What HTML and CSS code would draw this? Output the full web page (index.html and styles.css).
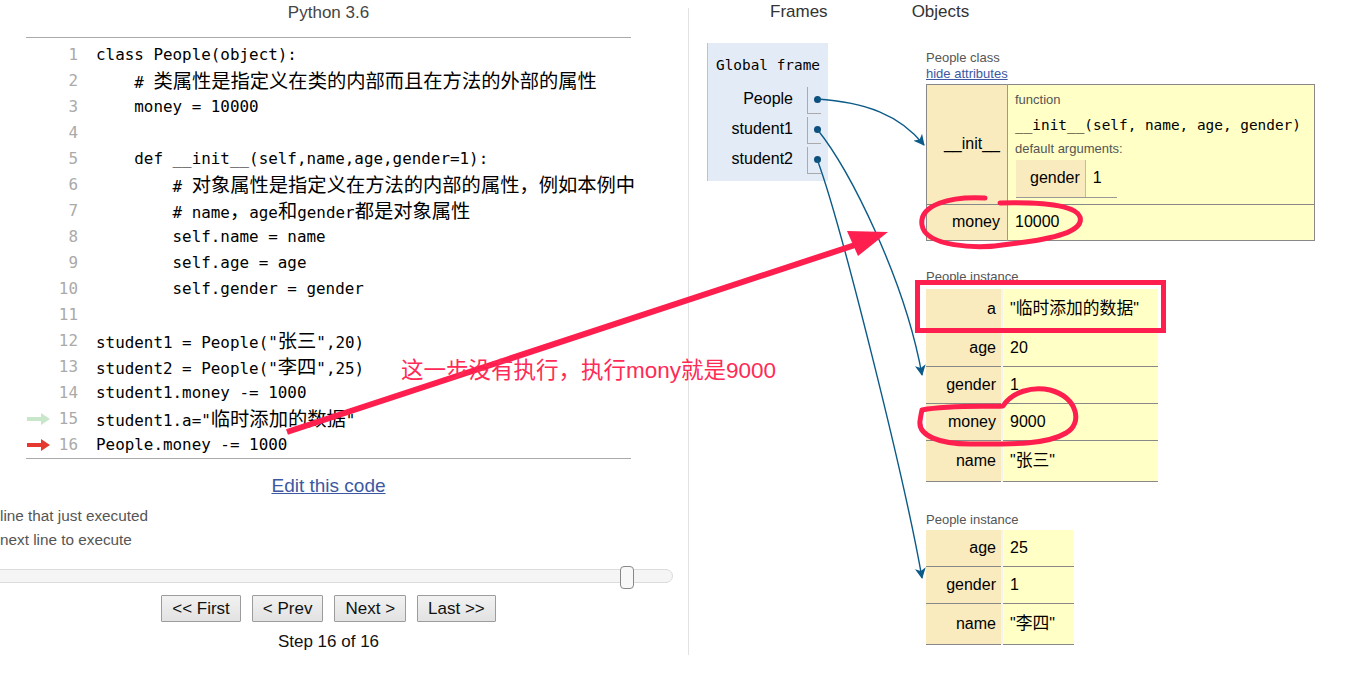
FILE: index.html
```html
<!DOCTYPE html>
<html>
<head>
<meta charset="utf-8">
<title>Python Tutor</title>
<link rel="stylesheet" href="styles.css">
</head>
<body>
<div class="page">
  <section class="left">
    <div class="left-inner">
      <div class="lang">Python 3.6</div>
      <div class="code">
        <div class="line"><span class="gutter"></span><span class="num">1</span><span class="src">class People(object):</span></div>
        <div class="line"><span class="gutter"></span><span class="num">2</span><span class="src">    # <span class="zh">类属性是指定义在类的内部而且在方法的外部的属性</span></span></div>
        <div class="line"><span class="gutter"></span><span class="num">3</span><span class="src">    money = 10000</span></div>
        <div class="line"><span class="gutter"></span><span class="num">4</span><span class="src"></span></div>
        <div class="line"><span class="gutter"></span><span class="num">5</span><span class="src">    def __init__(self,name,age,gender=1):</span></div>
        <div class="line"><span class="gutter"></span><span class="num">6</span><span class="src">        # <span class="zh">对象属性是指定义在方法的内部的属性，例如本例中</span></span></div>
        <div class="line"><span class="gutter"></span><span class="num">7</span><span class="src">        # name<span class="zh">，</span>age<span class="zh">和</span>gender<span class="zh">都是对象属性</span></span></div>
        <div class="line"><span class="gutter"></span><span class="num">8</span><span class="src">        self.name = name</span></div>
        <div class="line"><span class="gutter"></span><span class="num">9</span><span class="src">        self.age = age</span></div>
        <div class="line"><span class="gutter"></span><span class="num">10</span><span class="src">        self.gender = gender</span></div>
        <div class="line"><span class="gutter"></span><span class="num">11</span><span class="src"></span></div>
        <div class="line"><span class="gutter"></span><span class="num">12</span><span class="src">student1 = People("<span class="zh">张三</span>",20)</span></div>
        <div class="line"><span class="gutter"></span><span class="num">13</span><span class="src">student2 = People("<span class="zh">李四</span>",25)</span></div>
        <div class="line"><span class="gutter"></span><span class="num">14</span><span class="src">student1.money -= 1000</span></div>
        <div class="line"><span class="gutter"><svg class="garrow" width="24" height="12" viewBox="0 0 24 12"><path d="M0 4H14V0L23 6L14 12V8H0Z" fill="#c8e6c9"/></svg></span><span class="num">15</span><span class="src">student1.a="<span class="zh">临时添加的数据</span>"</span></div>
        <div class="line"><span class="gutter"><svg class="garrow" width="24" height="12" viewBox="0 0 24 12"><path d="M0 4H14V0L23 6L14 12V8H0Z" fill="#e5392f"/></svg></span><span class="num">16</span><span class="src">People.money -= 1000</span></div>
      </div>
      <a class="edit" href="#">Edit this code</a>
      <div class="legend">
        <div>line that just executed</div>
        <div>next line to execute</div>
      </div>
      <div class="slider">
        <div class="track"></div>
        <div class="handle"></div>
      </div>
      <div class="buttons">
        <button>&lt;&lt; First</button>
        <button>&lt; Prev</button>
        <button>Next &gt;</button>
        <button>Last &gt;&gt;</button>
      </div>
      <div class="step">Step 16 of 16</div>
    </div>
  </section>

  <section class="right">
    <div class="headers"><span>Frames</span><span class="objhead">Objects</span></div>
    <div class="viz">
      <div class="frames">
        <div class="frame">
          <div class="ftitle">Global frame</div>
          <div class="frow"><span class="vname">People</span><span class="vval"><span class="dot"></span></span></div>
          <div class="frow"><span class="vname">student1</span><span class="vval"><span class="dot"></span></span></div>
          <div class="frow"><span class="vname">student2</span><span class="vval"><span class="dot"></span></span></div>
        </div>
      </div>
      <div class="objects">
        <div class="olabel">People class</div>
        <a class="hide" href="#">hide attributes</a>
        <table class="cls">
          <tr>
            <td class="key">__init__</td>
            <td class="val fn">
              <div class="small">function</div>
              <div class="sig">__init__(self, name, age, gender)</div>
              <div class="small da">default arguments:</div>
              <table class="defs"><tr><td class="dkey">gender</td><td class="dval">1</td></tr></table>
            </td>
          </tr>
          <tr class="sep">
            <td class="key">money</td>
            <td class="val">10000</td>
          </tr>
        </table>

        <div class="olabel inst-label">People instance</div>
        <table class="inst">
          <tr class="tall"><td class="key">a</td><td class="val">"<span class="hz">临时添加的数据</span>"</td></tr>
          <tr><td class="key">age</td><td class="val">20</td></tr>
          <tr><td class="key">gender</td><td class="val">1</td></tr>
          <tr><td class="key">money</td><td class="val">9000</td></tr>
          <tr class="tall"><td class="key">name</td><td class="val">"<span class="hz">张三</span>"</td></tr>
        </table>

        <div class="olabel inst-label2">People instance</div>
        <table class="inst inst2">
          <tr><td class="key">age</td><td class="val">25</td></tr>
          <tr><td class="key">gender</td><td class="val">1</td></tr>
          <tr class="tall"><td class="key">name</td><td class="val">"<span class="hz">李四</span>"</td></tr>
        </table>
      </div>
    </div>
  </section>

  <svg class="overlay" width="1372" height="683" viewBox="0 0 1372 683">
    <defs>
      <marker id="ah" markerWidth="11" markerHeight="11" refX="10" refY="5.5" orient="auto" markerUnits="userSpaceOnUse">
        <path d="M0 0L11 5.5L0 11L3 5.5Z" fill="#0b5a88"/>
      </marker>
    </defs>
    <g fill="none" stroke="#0b5a88" stroke-width="1.4">
      <path d="M817 99C865 102 900 115 924 145" marker-end="url(#ah)"/>
      <path d="M817 129C850 170 905 280 922 375" marker-end="url(#ah)"/>
      <path d="M817 159C840 220 905 480 922 578" marker-end="url(#ah)"/>
    </g>
    <g fill="none" stroke="#ff1f4f" stroke-width="5" stroke-linecap="round" stroke-linejoin="round">
      <line x1="287" y1="432" x2="858" y2="244" stroke-width="6" stroke-linecap="butt"/>
      <rect x="917.5" y="282.5" width="246" height="48" stroke-linecap="butt" stroke-linejoin="miter"/>
      <path d="M985 198C950 196 919 205 922 225C925 246 975 250 1010 244C1055 239 1084 231 1080 217C1076 205 1040 202 1000 203"/>
      <path d="M922 410C950 405 985 407 1003 406C1012 392 1032 386 1050 390C1078 397 1083 424 1066 433C1046 445 1010 444 970 444C940 444 918 436 920 421C921 414 922 410 922 410"/>
    </g>
    <polygon points="888,232 847,231 858,256" fill="#ff1f4f"/>
  </svg>
  <div class="note">这一步没有执行，执行mony就是9000</div>
</div>
</body>
</html>
```

FILE: styles.css
```css
* { box-sizing: border-box; }

body {
  margin: 0;
  background: #fff;
  color: #000;
  font-family: "Liberation Sans", Arial, "Noto Sans CJK SC", sans-serif;
}

.page {
  position: relative;
  display: flex;
  width: 1372px;
  height: 683px;
  overflow: hidden;
}

/* ---------- left: code panel ---------- */
.left {
  flex: none;
  width: 689px;
  height: 647px;
  margin-top: 8px;
  border-right: 1px solid #e2e2e2;
}

.left-inner {
  margin-left: 26px;
  width: 605px;
}

.lang {
  margin-top: -5px;
  padding-bottom: 14px;
  text-align: center;
  font-size: 17px;
  line-height: 20px;
  color: #444;
}

.code {
  border-top: 1px solid #aaa;
  border-bottom: 1px solid #aaa;
  padding-top: 4px;
  font-family: "DejaVu Sans Mono", "Liberation Mono", "Noto Sans CJK SC", monospace;
  font-size: 15.9px;
}

.line {
  display: flex;
  align-items: center;
  height: 26px;
  line-height: 26px;
}

.gutter {
  flex: none;
  width: 30px;
  height: 26px;
  display: flex;
  align-items: center;
  padding-left: 1px;
}

.num {
  flex: none;
  width: 22px;
  text-align: right;
  color: #aaa;
}

.src {
  padding-left: 18px;
  white-space: pre;
}

.zh {
  font-family: "Noto Sans CJK SC", sans-serif;
  font-size: 19.3px;
  line-height: 26px;
}

.edit {
  display: block;
  margin-top: 16px;
  text-align: center;
  font-size: 19px;
  line-height: 22px;
  color: #3d58a2;
}

.legend {
  margin-left: -26px;
  margin-top: 7px;
  font-size: 15.3px;
  line-height: 24px;
  color: #555;
}

.slider {
  position: relative;
  margin-top: 17px;
  height: 14px;
}

.track {
  margin-left: -36px;
  width: 683px;
  height: 14px;
  background: #f5f5f5;
  border: 1px solid #dcdcdc;
  border-radius: 7px;
}

.handle {
  position: absolute;
  left: 594px;
  top: -3px;
  width: 14px;
  height: 23px;
  background: #f8f8f8;
  border: 1px solid #888;
  border-radius: 4px;
}

.buttons {
  display: flex;
  justify-content: center;
  gap: 11px;
  margin-top: 12px;
}

.buttons button {
  height: 27px;
  padding: 0 10px;
  font-family: "Liberation Sans", Arial, sans-serif;
  font-size: 17px;
  color: #111;
  background: linear-gradient(#f2f2f2, #e2e2e2);
  border: 1px solid #9c9c9c;
  border-radius: 1px;
}

.step {
  margin-top: 10px;
  text-align: center;
  font-size: 17px;
  line-height: 20px;
  color: #111;
}

/* ---------- right: visualization ---------- */
.right {
  flex: 1;
}

.headers {
  display: flex;
  padding-left: 81px;
  margin-top: 2px;
  font-size: 17px;
  line-height: 20px;
  color: #333;
}

.objhead {
  margin-left: 84px;
}

.viz {
  display: flex;
  align-items: flex-start;
  margin-top: 21px;
  padding-left: 18px;
}

.frames {
  flex: none;
  width: 121px;
}

.frame {
  background: #e2ebf6;
  border-left: 1px solid #b9c4cc;
  padding: 12px 0 7px;
}

.ftitle {
  padding-left: 8px;
  font-family: "DejaVu Sans Mono", "Liberation Mono", monospace;
  font-size: 14.4px;
  line-height: 20px;
  margin-bottom: 9px;
}

.frow {
  display: flex;
  height: 30px;
}

.vname {
  flex: 1;
  text-align: right;
  padding-right: 14px;
  font-size: 16px;
  line-height: 30px;
}

.vval {
  flex: none;
  width: 14px;
  height: 27px;
  margin-top: 3px;
  margin-right: 7px;
  border-left: 1px solid #aaa;
  border-bottom: 1px solid #aaa;
  padding-left: 6px;
  padding-top: 9px;
}

.dot {
  display: block;
  width: 7px;
  height: 7px;
  border-radius: 50%;
  background: #0c4f7c;
}

.objects {
  flex: none;
  margin-left: 98px;
}

.olabel {
  margin-top: 7px;
  font-size: 13px;
  line-height: 16px;
  color: #555;
}

.hide {
  display: block;
  font-size: 13px;
  line-height: 16px;
  color: #3d58a2;
}

table {
  border-collapse: collapse;
}

.cls {
  margin-top: 2px;
  width: 389px;
  background: #ffffc6;
  border: 1px solid #888;
  font-size: 16px;
}

.cls .key {
  background: #faebbf;
  text-align: right;
  vertical-align: middle;
  padding: 0 7px 0 14px;
  border-right: 1px solid #999;
  width: 81px;
}

.cls .val {
  padding: 0 10px 0 7px;
  vertical-align: middle;
}

.cls .fn {
  padding-top: 7px;
  padding-bottom: 6px;
}

.cls .sep td {
  border-top: 1px solid #888;
  height: 36px;
}

.small {
  font-size: 13px;
  line-height: 16px;
  color: #555;
}

.sig {
  margin-top: 6px;
  font-family: "DejaVu Sans Mono", "Liberation Mono", monospace;
  font-size: 14.4px;
  line-height: 22px;
  white-space: nowrap;
}

.da {
  margin-top: 5px;
}

.defs {
  margin-top: 3px;
  margin-left: 1px;
}

.defs td {
  height: 37px;
  border-bottom: 1px solid #999;
}

.dkey {
  background: #faebbf;
  text-align: right;
  padding: 0 5px 0 14px;
}

.dval {
  border-left: 1px solid #bbb;
  padding: 0 15px 0 7px;
}

.inst-label {
  margin-top: 28px;
}

.inst-label2 {
  margin-top: 30px;
}

.inst {
  margin-top: 4px;
  font-size: 16px;
}

.inst2 {
  margin-top: 2px;
}

.inst td {
  border-bottom: 1px solid #888;
  padding: 9px 0;
  line-height: 18px;
}

.inst .tall td {
  padding-top: 11px;
  padding-bottom: 11px;
}

.inst .key {
  background: #faebbf;
  text-align: right;
  padding-left: 14px;
  padding-right: 5px;
  border-right: 2px solid #f4f4ec;
  width: 76px;
}

.inst .val {
  background: #ffffc6;
  padding-left: 7px;
  padding-right: 19px;
}

.hz {
  font-size: 16.8px;
}

/* ---------- annotations ---------- */
.overlay {
  position: absolute;
  left: 0;
  top: 0;
  pointer-events: none;
}

.note {
  position: absolute;
  left: 401px;
  top: 356px;
  font-family: "Liberation Sans", "Noto Sans CJK SC", sans-serif;
  font-size: 22.5px;
  line-height: 30px;
  color: #ff2a55;
  white-space: nowrap;
}
```
